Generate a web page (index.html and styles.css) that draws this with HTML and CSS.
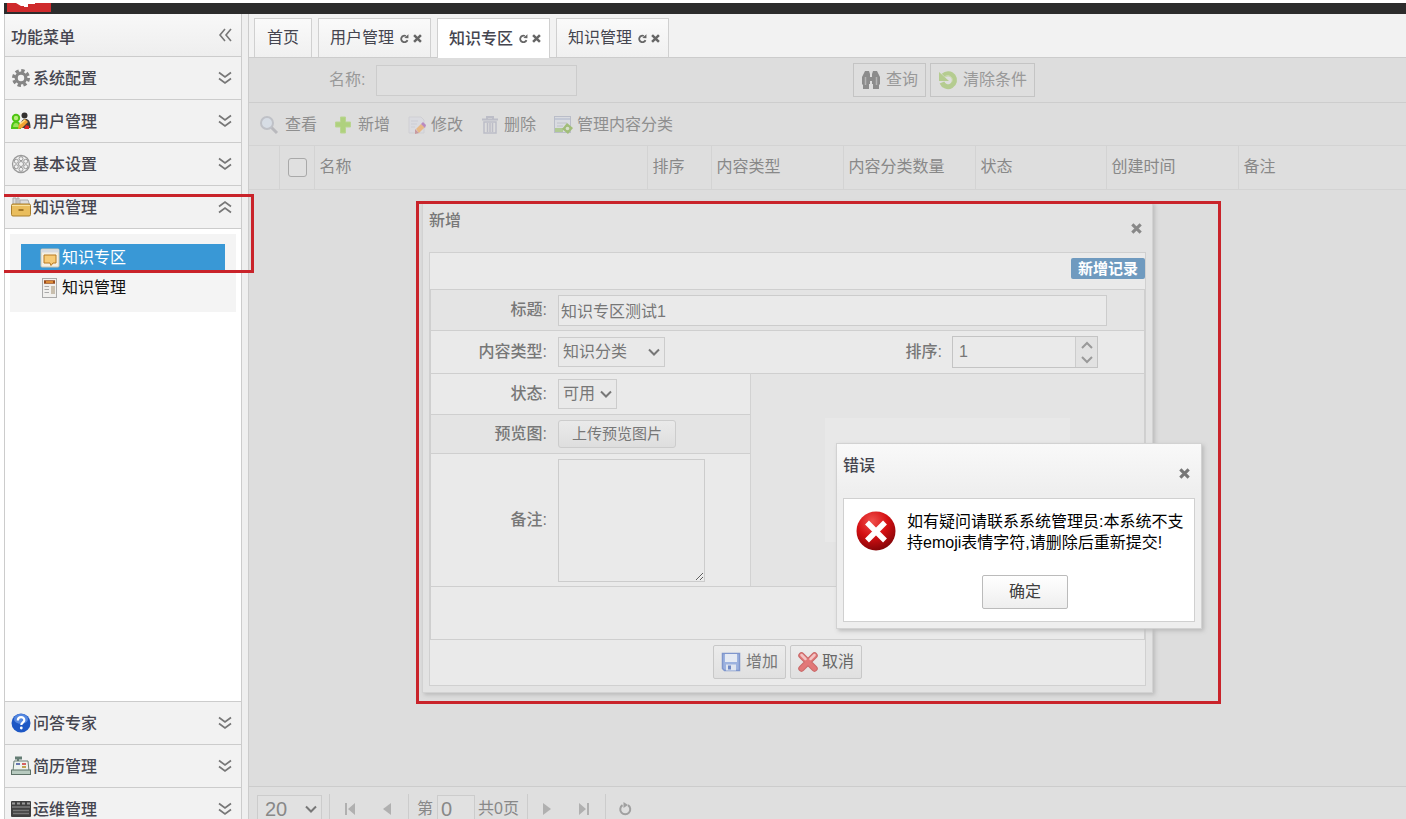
FILE: index.html
```html
<!DOCTYPE html>
<html lang="zh-CN">
<head>
<meta charset="utf-8">
<title>知识专区</title>
<link rel="stylesheet" href="styles.css">
</head>
<body>
<svg class="defs" aria-hidden="true">
  <symbol id="down" viewBox="0 0 14 14"><path d="M1 1.500 7 6l6-4.500M1 7.500 7 12l6-4.500" fill="none" stroke="#777" stroke-width="1.700"/></symbol>
  <symbol id="up" viewBox="0 0 14 14"><path d="M1 6.500 7 2l6 4.500M1 12.500 7 8l6 4.500" fill="none" stroke="#777" stroke-width="1.700"/></symbol>
  <symbol id="close" viewBox="0 0 10 10"><path d="M1.200 1.200 8.800 8.800M8.800 1.200 1.200 8.800" stroke="currentColor" stroke-width="2.800"/></symbol>
  <symbol id="reload" viewBox="0 0 10 10"><path d="M8.300 6.800A3.600 3.600 0 1 1 6.500 2.200" fill="none" stroke="currentColor" stroke-width="2"/><path d="M4.800 4.400 9.400 4.800V.2z" fill="currentColor"/></symbol>
</svg>
<div class="app">
  <header class="topbar">
    <svg class="logo" viewBox="0 0 44 9"><rect width="44" height="9" fill="#cf2a2c"/><path d="M9 0h19v1h-7v3h-4V3h-3z" fill="#fff"/></svg>
  </header>
  <div class="main">
    <nav class="sidebar">
      <div class="panel-title"><span>功能菜单</span><button class="plain" aria-label="收起"><svg class="i14" viewBox="0 0 14 14"><path d="M7 1 2 7l5 6M13 1 8 7l5 6" fill="none" stroke="#777" stroke-width="1.600"/></svg></button></div>
      <button class="group">
        <svg class="i20" viewBox="0 0 20 20"><circle cx="10" cy="10" r="7.500" fill="none" stroke="#858585" stroke-width="3" stroke-dasharray="3.400 2.490"/><circle cx="10" cy="10" r="4.800" fill="none" stroke="#858585" stroke-width="3.200"/></svg>
        <span>系统配置</span><svg class="i14"><use href="#down"/></svg></button>
      <button class="group">
        <svg class="i20" viewBox="0 0 20 20"><path d="M9.500 17c0-7 2-9 5-9s5 2 5 9z" fill="#413b38"/><circle cx="13.500" cy="4.500" r="3" fill="#33302f"/><circle cx="5" cy="7" r="3.200" fill="#b6ee7a" stroke="#4fc514" stroke-width="2"/><path d="M1 17c0-4 1.500-6 4-6s4 2 4 6z" fill="#9be35c" stroke="#4fc514" stroke-width="2"/><path d="m8 13 6-5 3 3-6 6-4 1z" fill="#f2a331"/><path d="m9 13 5-4" stroke="#ffe28a" stroke-width="1.500"/><path d="m15 14 3 1v3h-5z" fill="#d22"/></svg>
        <span>用户管理</span><svg class="i14"><use href="#down"/></svg></button>
      <button class="group">
        <svg class="i20" viewBox="0 0 20 20" fill="none" stroke="#999"><circle cx="10" cy="10" r="8.500" stroke-width="1.300"/><circle cx="10" cy="10" r="2.500"/><circle cx="10" cy="4.700" r="2"/><circle cx="10" cy="15.300" r="2"/><circle cx="5.300" cy="7.300" r="2"/><circle cx="14.700" cy="7.300" r="2"/><circle cx="5.300" cy="12.700" r="2"/><circle cx="14.700" cy="12.700" r="2"/></svg>
        <span>基本设置</span><svg class="i14"><use href="#down"/></svg></button>
      <button class="group" aria-expanded="true">
        <svg class="i20" viewBox="0 0 20 20"><path d="M2 9V1h3v8M6 9V1h2v8M9 9V3h8l2 6" fill="#ddd" stroke="#aaa"/><rect x=".5" y="7" width="19" height="12" rx="1.500" fill="#e9bd5d" stroke="#a97f2d"/><path d="M1 8.500h18" stroke="#f8e2a0"/><path d="M7.500 13h5" stroke="#8a6115" stroke-width="1.500"/></svg>
        <span>知识管理</span><svg class="i14"><use href="#up"/></svg></button>
      <div class="group-body">
        <ul class="tree">
          <li><a class="leaf selected" href="#zone"><svg class="i20" viewBox="0 0 20 20"><rect x="1" y="1" width="18" height="18" rx="1" fill="#f5efe2" stroke="#cfc5ae"/><path d="M1 3h18" stroke="#d8dbe0" stroke-width="3"/><path d="M4 7h12v8h-3l-2 2.500L10 15H4z" fill="#f7cb77" stroke="#b87b22"/></svg>知识专区</a></li>
          <li><a class="leaf" href="#manage"><svg class="i20" viewBox="0 0 20 20"><rect x="2.500" y=".5" width="14" height="19" fill="#f1f0ee" stroke="#aaa"/><path d="M4 4h11" stroke="#9a4d1d" stroke-width="3.500"/><path d="M6 4h7" stroke="#f0a040" stroke-width="1.500"/><path d="M4.500 8.500H9M4.500 11.500H9M4.500 14.500H9" stroke="#aaa"/><rect x="11" y="8" width="4" height="8" fill="#c9bfae"/></svg>知识管理</a></li>
        </ul>
      </div>
      <button class="group">
        <svg class="i20" viewBox="0 0 20 20"><circle cx="10" cy="10" r="9.500" fill="#1d57c4"/><ellipse cx="10" cy="6" rx="7" ry="5" fill="#6d9cec" opacity=".7"/><path d="M6.800 7.500C6.800 3 13.500 3.200 13.300 7.200c0 2-3 2.300-3 4.800" fill="none" stroke="#fff" stroke-width="2.200"/><circle cx="10.300" cy="15" r="1.400" fill="#fff"/></svg>
        <span>问答专家</span><svg class="i14"><use href="#down"/></svg></button>
      <button class="group">
        <svg class="i20" viewBox="0 0 20 20"><rect x="4" y=".5" width="7" height="3" fill="#647d74"/><path d="M7 3v3" stroke="#647d74" stroke-width="2"/><path d="M3 5h14l1 10H2z" fill="#edf2ee" stroke="#6b7f75"/><path d="M5 8h4" stroke="#3b4c9b" stroke-width="1.500"/><path d="M11 8h4" stroke="#c33" stroke-width="1.500"/><path d="M11 11h4" stroke="#b58a1c" stroke-width="1.500"/><rect x=".5" y="14" width="19" height="4.500" fill="#b7cabf" stroke="#5d7167"/></svg>
        <span>简历管理</span><svg class="i14"><use href="#down"/></svg></button>
      <button class="group">
        <svg class="i20" viewBox="0 0 20 20"><rect y="2" width="20" height="16" rx="1" fill="#3f3f3f"/><path d="M1 4.500h18" stroke="#999" stroke-width="2" stroke-dasharray="3 2"/><path d="M1 8h18" stroke="#999"/><path d="M2 11.500h16M2 14.500h16" stroke="#777" stroke-width="1.500"/></svg>
        <span>运维管理</span><svg class="i14"><use href="#down"/></svg></button>
    </nav>

    <main class="content">
      <div class="tabs">
        <button class="tab">首页</button>
        <button class="tab">用户管理<svg class="i10"><use href="#reload"/></svg><svg class="i10"><use href="#close"/></svg></button>
        <button class="tab active">知识专区<svg class="i10"><use href="#reload"/></svg><svg class="i10"><use href="#close"/></svg></button>
        <button class="tab">知识管理<svg class="i10"><use href="#reload"/></svg><svg class="i10"><use href="#close"/></svg></button>
      </div>
      <form class="filter">
        <div class="filter-field"><label for="q">名称:</label><input id="q" type="text"></div>
        <div class="filter-actions">
          <button type="button" class="btn muted"><svg class="i20" viewBox="0 0 20 20" fill="#8c8c8c"><path d="M4 1h4l1 3v10H8v5H2v-4l-1-1V7zM16 1h-4l-1 3v10h1v5h6v-4l1-1V7z"/><path d="M8 7h4v4H8z"/><path d="M4.500 7v8M15.500 7v8" stroke="#b5b5b5" stroke-width="1.500"/></svg>查询</button>
          <button type="button" class="btn muted"><svg class="i20" viewBox="0 0 20 20"><path d="M5.500 5.500A6.500 6.500 0 1 1 4 12.500" fill="none" stroke="#b5cc90" stroke-width="5"/><path d="M1 2v9h10z" fill="#b5cc90"/><path d="M7 6.500a4.500 4.500 0 0 1 7 5" fill="none" stroke="#cfdcb4"/></svg>清除条件</button>
        </div>
      </form>
      <div class="toolbar">
        <button class="tool"><svg class="i20" viewBox="0 0 20 20"><path d="m12 12 6 6" stroke="#b9b9bd" stroke-width="3"/><circle cx="8" cy="8" r="6" fill="#d7dde5" stroke="#bfc1c7" stroke-width="2"/></svg>查看</button>
        <button class="tool"><svg class="i20" viewBox="0 0 20 20"><path d="M6.500 2h5v5h5v5h-5v6h-5v-6h-5V7h5z" fill="#afd17e" stroke="#bad592"/></svg>新增</button>
        <button class="tool"><svg class="i20" viewBox="0 0 20 20"><path d="M2 2h12l3 3v13H2z" fill="#dadbe0" stroke="#cfcfd3"/><path d="M4 6h7M4 9h6M4 12h4" stroke="#cccdd4"/><path d="m9 14 5-5 4 3-6 6z" fill="#e8b986"/><path d="m14 9 4 4 1-3-3-3z" fill="#b98abf"/><path d="m8 14 4 4-4 1z" fill="#c99a9f"/></svg>修改</button>
        <button class="tool"><svg class="i20" viewBox="0 0 20 20" fill="none" stroke="#bcbdc7"><path d="M2 4.500h16M7 4V2h6v2" stroke-width="2"/><path d="M4 7h12v11H4z" stroke-width="1.500"/><path d="M7.500 8v9M10 8v9M12.500 8v9" stroke-width="1.500"/></svg>删除</button>
        <button class="tool"><svg class="i20" viewBox="0 0 20 20"><rect x="1.500" y="1.500" width="16" height="16" fill="#d9dbe0" stroke="#babdc8"/><path d="M2 4h15" stroke="#c3c8d5" stroke-width="2"/><path d="M4 8h10M4 11h6" stroke="#c0c2ca"/><path d="M2 15h8" stroke="#b0c994" stroke-width="4"/><path d="m14 8 6 5-5 6-6-5z" fill="#a1bd79"/><circle cx="14.500" cy="13.500" r="1.800" fill="#d8dfcc"/></svg>管理内容分类</button>
      </div>
      <table class="grid">
        <colgroup><col class="c30"><col class="c35"><col class="c333"><col class="c64"><col class="c132"><col class="c132"><col class="c131"><col class="c132"><col></colgroup>
        <thead><tr><th></th><th class="check"><input type="checkbox" aria-label="全选"></th><th>名称</th><th>排序</th><th>内容类型</th><th>内容分类数量</th><th>状态</th><th>创建时间</th><th>备注</th></tr></thead>
      </table>
      <div class="grid-body"></div>
      <footer class="pager">
        <select aria-label="每页条数"><option>20</option></select>
        <i class="sep"></i>
        <button class="plain" aria-label="首页"><svg class="i12" viewBox="0 0 12 12"><path d="M1 0h2v12H1zM11 0v12L4 6z" fill="#b0b0b0"/></svg></button>
        <button class="plain" aria-label="上一页"><svg class="i12" viewBox="0 0 12 12"><path d="M10 0v12L2 6z" fill="#b0b0b0"/></svg></button>
        <i class="sep"></i>
        <label for="page">第</label><input id="page" type="text" value="0"><span>共0页</span>
        <i class="sep"></i>
        <button class="plain" aria-label="下一页"><svg class="i12" viewBox="0 0 12 12"><path d="M2 0v12l8-6z" fill="#b0b0b0"/></svg></button>
        <button class="plain" aria-label="末页"><svg class="i12" viewBox="0 0 12 12"><path d="M9 0h2v12H9zM1 0v12l7-6z" fill="#b0b0b0"/></svg></button>
        <i class="sep"></i>
        <button class="plain" aria-label="刷新"><svg class="i14" viewBox="0 0 14 14"><path d="M10 3.100A5 5 0 1 1 4.500 3.100" fill="none" stroke="#a0a0a0" stroke-width="2"/><path d="M5.500 0v6l4.500-3z" fill="#a0a0a0"/></svg></button>
      </footer>
    </main>
  </div>
</div>

<section class="dialog" role="dialog" aria-label="新增">
  <header class="dialog-head"><h2>新增</h2><button class="plain" aria-label="关闭"><svg class="i10"><use href="#close"/></svg></button></header>
  <form class="dialog-body">
    <div class="badge-row"><span class="badge">新增记录</span></div>
    <div class="form">
      <div class="row r-title alt"><label for="t">标题:</label><input class="grow" id="t" type="text" value="知识专区测试1"></div>
      <div class="row r-type"><label for="ty">内容类型:</label><select class="wide" id="ty"><option>知识分类</option></select>
        <div class="order"><label for="o">排序:</label><div class="spinner"><input id="o" type="text" value="1"><div class="arrows">
          <button type="button" aria-label="增大"><svg class="i12" viewBox="0 0 12 12"><path d="m1 9 5-5 5 5" fill="none" stroke="#999" stroke-width="2"/></svg></button>
          <button type="button" aria-label="减小"><svg class="i12" viewBox="0 0 12 12"><path d="m1 3 5 5 5-5" fill="none" stroke="#999" stroke-width="2"/></svg></button></div></div></div></div>
      <div class="split">
        <div class="left">
          <div class="row r-state"><label for="s">状态:</label><select id="s"><option>可用</option></select></div>
          <div class="row r-upload alt"><label for="up">预览图:</label><button type="button" class="upload" id="up">上传预览图片</button></div>
          <div class="row r-remark"><label for="r">备注:</label><textarea id="r"></textarea></div>
        </div>
        <div class="preview"><div class="thumb"></div></div>
      </div>
      <div class="r-empty"></div>
    </div>
    <div class="actions">
      <button type="button" class="btn"><svg class="i20" viewBox="0 0 20 20"><path d="M1.500 1.500h17v17h-15l-2-2z" fill="#9cb2df" stroke="#7f96cc" stroke-width="1.500"/><rect x="4" y="2" width="12" height="8" fill="#e5eaf3"/><rect x="5" y="12.500" width="10" height="6" fill="#dfe5f0"/><rect x="7" y="13.500" width="3" height="4" fill="#6e88c4"/></svg>增加</button>
      <button type="button" class="btn cancel"><svg class="i20" viewBox="0 0 20 20"><path d="m3.500 3.500 13 13M16.500 3.500l-13 13" stroke="#c96a6a" stroke-width="6.500" stroke-linecap="round"/><path d="m3.500 3.500 13 13M16.500 3.500l-13 13" stroke="#e27878" stroke-width="4.500" stroke-linecap="round"/><path d="m3.500 3 4 4M16.500 3l-4 4" stroke="#f3c4c4" stroke-width="2.500" stroke-linecap="round"/></svg>取消</button>
    </div>
  </form>
</section>

<section class="alert" role="alertdialog" aria-label="错误">
  <header class="dialog-head"><h2>错误</h2><button class="plain" aria-label="关闭"><svg class="i10"><use href="#close"/></svg></button></header>
  <div class="alert-body">
    <div class="message">
      <svg class="i40" viewBox="0 0 40 40"><defs><radialGradient id="red" cx=".4" cy=".25" r=".8"><stop offset="0" stop-color="#f0504c"/><stop offset=".5" stop-color="#d40f12"/><stop offset="1" stop-color="#7c0407"/></radialGradient></defs><circle cx="20" cy="20" r="19.500" fill="url(#red)"/><path d="m11 11.500 18 18M29 11.500l-18 18" stroke="#fff" stroke-width="5.500"/></svg>
      <p>如有疑问请联系系统管理员:本系统不支持emoji表情字符,请删除后重新提交!</p>
    </div>
    <button class="ok">确定</button>
  </div>
</section>
<div class="mark mark-menu"></div>
<div class="mark mark-dialog"></div>
</body>
</html>
```
FILE: styles.css
```css
* { box-sizing: border-box; }
body {
  margin: 0;
  height: 100vh;
  overflow: hidden;
  position: relative;
  background: #fff;
  font: 16px/22px "Liberation Sans", "Noto Sans CJK SC", sans-serif;
  color: #404040;
}
button, input, select, textarea { font: inherit; color: inherit; margin: 0; }
svg { flex: none; display: block; }
.defs { position: absolute; width: 0; height: 0; }
.i10 { width: 9px; height: 9px; }
.i12 { width: 12px; height: 12px; }
.i14 { width: 14px; height: 14px; }
.i20 { width: 20px; height: 20px; }
.i40 { width: 40px; height: 40px; }
.plain { border: 0; padding: 0; background: none; }

.app { height: calc(100vh + 12px); padding: 3px 0 0 4px; display: flex; flex-direction: column; }
.topbar { flex: none; height: 11px; padding-left: 3px; background: #2c2c2c; }
.logo { width: 44px; height: 9px; }
.main { flex: 1; min-height: 0; display: flex; background: #efefef; }

.sidebar { width: 238px; flex: none; display: flex; flex-direction: column; border: solid #ccc; border-width: 0 1px; background: #fff; }
.panel-title, .group {
  flex: none; height: 43px; display: flex; align-items: center; justify-content: space-between;
  border: 0; border-bottom: 1px solid #ccc; padding: 0 9px 0 6px; font-weight: 500; color: #45454f;
  background: #f2f2f2; text-align: left;
}
.panel-title { background: linear-gradient(#f8f8f8, #eee); }
.panel-title span { padding-top: 5px; }
.group span { flex: 1; padding: 2px 0 0 2px; }
.group-body { flex: 1; padding: 5px; border-bottom: 1px solid #ccc; }
.tree { list-style: none; margin: 0; padding: 10px 11px; background: #f4f4f4; }
.tree li + li { margin-top: 2px; }
.leaf { display: flex; align-items: center; gap: 2px; height: 28px; padding-left: 19px; color: #111; text-decoration: none; }
.leaf.selected { background: #3998d6; color: #fff; }

.content { flex: 1; min-width: 0; margin-left: 6px; border-left: 1px solid #ccc; display: flex; flex-direction: column; background: #ddd; color: #888; }
.tabs { flex: none; height: 44px; display: flex; align-items: flex-end; gap: 6px; padding-left: 5px; background: #f2f2f2; border-bottom: 1px solid #ccc; }
.tab { height: 39px; display: flex; align-items: center; gap: 4px; padding: 0 8px 0 11px; border: 1px solid #d0d0d0; border-bottom: 0; background: linear-gradient(#fafafa, #f0f0f0); color: #45454f; }
.tab:first-child { padding: 0 12px; }
.tab svg { color: #666; }
.tab .i10:first-of-type { margin-left: 2px; }
.tab.active { height: 40px; margin-bottom: -1px; background: #fff; font-weight: 500; }
.filter { flex: none; height: 45px; display: flex; align-items: center; border-bottom: 1px solid #cdcdcd; color: #999; }
.filter-field { width: 604px; padding-left: 80px; display: flex; align-items: center; gap: 11px; }
.filter-field input { width: 201px; height: 31px; border: 1px solid #ccc; background: #dfdfdf; }
.filter-actions { display: flex; gap: 4px; }
.btn { height: 34px; display: flex; align-items: center; gap: 5px; padding: 0 7px; border: 1px solid #c8c8c8; border-radius: 2px; background: linear-gradient(#ececec, #e0e0e0); color: #777; }
.btn.muted { border-color: #c4c4c4; border-radius: 0; background: #dedede; color: #999; }
.toolbar { flex: none; height: 43px; display: flex; align-items: center; gap: 17px; padding: 2px 0 0 10px; border-bottom: 1px solid #d3d3d3; color: #8f8f8f; }
.tool { display: flex; align-items: center; gap: 4px; border: 0; padding: 0; background: none; }
.tool:first-child { gap: 6px; }
.grid { flex: none; width: 100%; table-layout: fixed; border-collapse: collapse; background: #dedede; }
.grid th { height: 43px; padding: 0 5px; border: solid #d3d3d3; border-width: 0 0 1px 1px; text-align: left; font-weight: 400; white-space: nowrap; }
.grid th:first-child { border-left: 0; }
.grid .check { padding: 0 8px; }
.check input { display: block; appearance: none; width: 19px; height: 19px; border: 1px solid #a9a9a9; border-radius: 3px; background: #e0e0e0; }
.c30 { width: 30px; } .c35 { width: 35px; } .c333 { width: 333px; } .c64 { width: 64px; } .c131 { width: 131px; } .c132 { width: 132px; }
.grid-body { flex: 1; }
.pager { flex: none; height: 45px; display: flex; align-items: center; padding-left: 8px; border-top: 1px solid #ccc; background: #dfdfdf; }
.pager select, .pager #page { height: 29px; border: 1px solid #ccc; background: #e1e1e1; font-size: 20px; line-height: 22px; }
.pager #page { width: 38px; padding: 0 3px; margin: 0 3px 0 4px; }
.pager .sep { height: 31px; border-left: 1px solid #ccc; margin: 0 8px; }
.pager button { width: 26px; display: flex; justify-content: center; }
.pager button + button { margin-left: 11px; }
.pager .sep + button { margin-left: -2px; }
.pager .sep:first-of-type { margin: 0 9px 0 7px; }

select {
  appearance: none; border: 1px solid #ccc; border-radius: 0; padding: 0 4px;
  background: #e9e9e9;
}
select, .pager select {
  background-image: url("data:image/svg+xml,%3Csvg xmlns='http://www.w3.org/2000/svg' width='12' height='12'%3E%3Cpath d='M1 3.500l5 5 5-5' fill='none' stroke='%23777' stroke-width='2'/%3E%3C/svg%3E");
  background-repeat: no-repeat;
  background-position: right 4px center;
}
.pager select { width: 65px; padding-left: 7px; }

.dialog, .alert { position: absolute; display: flex; flex-direction: column; border: 1px solid #d2d2d2; box-shadow: 2px 2px 4px #bbb; }
.dialog { left: 422px; top: 202px; width: 731px; padding: 0 6px 6px; background: #e3e3e3; color: #777; }
.dialog-head { display: flex; justify-content: space-between; }
.dialog-head h2 { margin: 0; font-size: 16px; line-height: 22px; font-weight: 500; }
.dialog-head svg { width: 11px; height: 11px; color: #777; }
.dialog .dialog-head { height: 49px; padding: 7px 4px 0 0; }
.dialog .dialog-head button { height: 36px; }
.dialog .dialog-head svg { color: #888; }
.dialog-body { border: 1px solid #d0d0d0; background: #eaeaea; }
.badge-row { height: 36px; display: flex; align-items: flex-start; justify-content: flex-end; padding-top: 5px; }
.badge { padding: 0 7px; border-radius: 2px; background: #6f9abf; color: #fff; font-size: 15px; font-weight: 700; line-height: 21px; }
.form { border: 1px solid #cfcfcf; border-top: 0; }
.row { display: flex; align-items: center; gap: 11px; border-top: 1px solid #cfcfcf; }
.row > label { width: 116px; flex: none; text-align: right; }
.row label { font-weight: 500; }
.alt, .preview { background: #e4e4e4; }
.row input, .row textarea { border: 1px solid #ccc; background: #eaeaea; }
.r-title { height: 41px; padding-right: 37px; }
.r-type { height: 43px; }
.r-state { height: 41px; }
.r-upload { height: 39px; }
.r-remark { height: 133px; }
.r-empty { height: 53px; border-top: 1px solid #cfcfcf; }
.row .grow { flex: 1; min-width: 0; height: 31px; padding: 0 2px; }
.row select { height: 30px; width: 59px; }
.row .wide { width: 107px; }
.order { margin-left: auto; padding-right: 46px; display: flex; align-items: center; gap: 10px; }
.spinner { display: flex; width: 146px; height: 32px; border: 1px solid #c4c4c4; }
.spinner input { flex: 1; min-width: 0; border: 0; padding: 0 6px; }
.arrows { width: 22px; display: grid; border-left: 1px solid #ccc; background: #e2e2e2; }
.arrows button { border: 0; padding: 0; background: none; display: grid; place-items: center; }
.split { display: flex; }
.left { width: 320px; flex: none; border-right: 1px solid #d2d2d2; }
.upload { height: 28px; padding: 0 13px; border: 1px solid #ccc; border-radius: 3px; background: linear-gradient(#eaeaea, #dedede); font-size: 15px; line-height: 20px; }
.row textarea { width: 147px; height: 123px; display: block; }
.preview { flex: 1; border-top: 1px solid #cfcfcf; padding: 44px 0 0 74px; }
.thumb { width: 245px; height: 124px; background: #e8e8e8; }
.actions { height: 45px; padding-bottom: 2px; display: flex; align-items: center; justify-content: center; gap: 4px; }
.cancel { gap: 4px; color: #666; }

.alert { left: 836px; top: 443px; width: 366px; padding: 0 6px 6px; background: linear-gradient(#f9f9f9, #eee 50px); color: #45454f; }
.alert .dialog-head { height: 54px; padding: 11px 5px 0 0; }
.alert .dialog-head button { height: 36px; }
.alert-body { padding: 12px 0 12px 12px; border: 1px solid #d0d0d0; background: #fff; color: #000; display: flex; flex-direction: column; align-items: center; }
.message { display: flex; gap: 11px; width: 100%; }
.message p { margin: 0; padding-right: 6px; line-height: 21px; }
.ok { width: 86px; height: 34px; margin-top: 22px; border: 1px solid #bbb; border-radius: 2px; background: linear-gradient(#fff, #eee); color: #404040; }

.mark { position: absolute; border: 3px solid #c9232a; pointer-events: none; }
.mark-menu { left: 4px; top: 194px; width: 250px; height: 79px; border-left: 0; }
.mark-dialog { left: 416px; top: 201px; width: 805px; height: 503px; }
```
